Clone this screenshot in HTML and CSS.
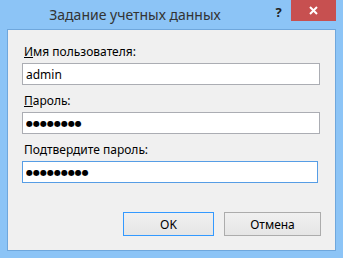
FILE: index.html
```
<!DOCTYPE html>
<html>
<head>
    <meta charset="utf-8">
    <link rel="stylesheet" href="styles.css">
</head>
<body>
<div class="window">
    <div class="titlebar">
        <div class="title">Задание учетных данных</div>
        <div class="help">?</div>
        <div class="close">
            <svg width="9" height="9" viewBox="0 0 9 9">
                <path d="M1 1 L8 8 M8 1 L1 8" stroke="#ffffff" stroke-width="2"/>
            </svg>
        </div>
    </div>
    <div class="client">
        <form name="creds" class="form">
            <label for="user" class="label"><u>И</u>мя пользователя:</label>
            <input type="text" id="user" class="field" value="admin" readonly>

            <label for="pass" class="label"><u>П</u>ароль:</label>
            <input type="text" id="pass" class="field dots" value="●●●●●●●●" readonly>

            <label for="pass2" class="label">По<u>д</u>твердите пароль:</label>
            <input type="text" id="pass2" class="field dots focused" value="●●●●●●●●●" readonly>
        </form>
        <div class="buttons">
            <button class="btn default">OK</button>
            <button class="btn cancel">Отмена</button>
        </div>
    </div>
</div>
</body>
</html>
```

FILE: styles.css
```
body {
    margin: 0;
    padding: 0;
    font-family: "Noto Sans", "Open Sans", sans-serif;
}

.window {
    width: 343px;
    height: 258px;
    box-sizing: border-box;
    background-color: #8cc4f6;
    padding: 0 7px 7px 7px;
    display: flex;
    flex-direction: column;
}

/* title bar */
.titlebar {
    height: 29px;
    display: flex;
    margin-left: -7px;
}

.title {
    width: 270px;
    text-align: center;
    font-size: 14px;
    line-height: 29px;
    color: #333333;
}

.help {
    width: 17px;
    text-align: center;
    font-size: 13px;
    font-weight: bold;
    line-height: 24px;
    color: #222222;
    margin-right: 4px;
}

.close {
    width: 45px;
    height: 21px;
    background-color: #c75050;
    display: flex;
    align-items: center;
    justify-content: center;
}

/* window body */
.client {
    flex: 1;
    background-color: #f0f0f0;
    border: 1px solid #6fa7dc;
    padding: 14px;
    display: flex;
    flex-direction: column;
}

.form {
    margin: 0;
    display: flex;
    flex-direction: column;
}

.label {
    font-size: 12px;
    line-height: 16px;
    color: #000000;
    margin: 0 0 3px 2px;
}

.field {
    width: 298px;
    height: 22px;
    box-sizing: border-box;
    border: 1px solid #abadb3;
    background: #ffffff;
    padding: 0 3px;
    margin: 0 0 8px 0;
    font-family: "Noto Sans", "Open Sans", sans-serif;
    font-size: 12px;
    color: #000000;
    outline: none;
}

.dots {
    font-family: "DejaVu Sans", sans-serif;
    font-size: 8px;
    letter-spacing: 0;
}

.focused {
    width: 296px;
    border-color: #569de5;
}

.buttons {
    margin-top: auto;
    display: flex;
    justify-content: flex-end;
    gap: 10px;
}

.btn {
    height: 24px;
    box-sizing: border-box;
    border: 1px solid #acacac;
    background: linear-gradient(#f0f0f0, #e5e5e5);
    font-family: "Noto Sans", "Open Sans", sans-serif;
    font-size: 12px;
    color: #000000;
    padding: 0;
}

.default {
    width: 91px;
    border-color: #3399ff;
}

.cancel {
    width: 97px;
}
```
